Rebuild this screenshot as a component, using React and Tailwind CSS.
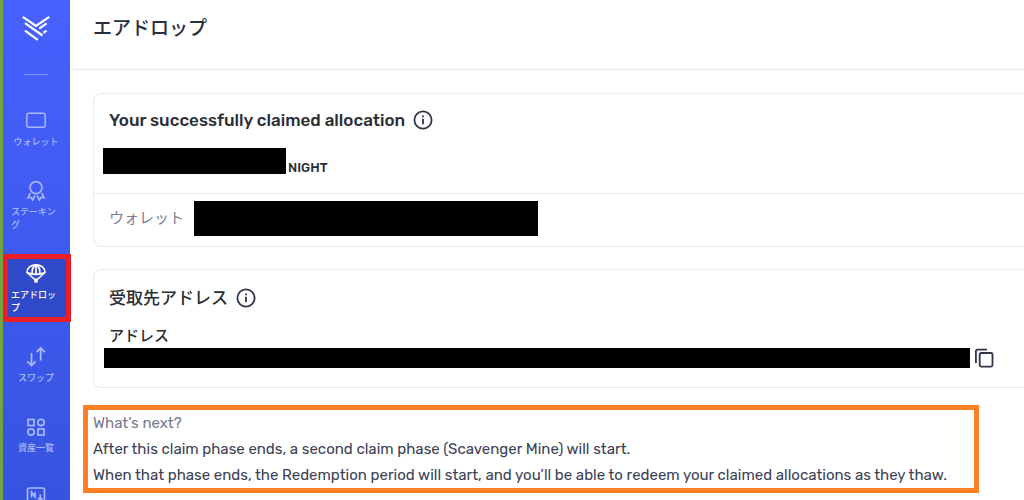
import clsx from "clsx";

const Logo = () => (
  <svg className="h-7 w-7" viewBox="0 0 28 28" fill="none" stroke="#fff" strokeWidth="2.200">
    <path d="M.8 2.800L14 12 27.200 2.800" />
    <path d="M3 9.200l17.500 12.300" />
    <path d="M3 16.600l12.700 9.200" />
    <path d="M24.600 9.400L17.300 14.600" />
    <path d="M24.600 16.600l-3.200 2.300" />
  </svg>
);

const WalletIcon = () => (
  <svg className="h-5.5 w-5.5" viewBox="0 0 22 22" fill="none" stroke="currentColor" strokeWidth="1.5">
    <rect x="1.800" y="3.300" width="18.400" height="14" rx="2" />
  </svg>
);

const StakingIcon = () => (
  <svg className="h-5.5 w-5.5" viewBox="0 0 22 22" fill="none" stroke="currentColor" strokeWidth="1.600">
    <circle cx="11" cy="7.600" r="6" />
    <path d="M5.200 13.200L3 17.700l3-.4 1.700 2.700 2.300-4.300M16.800 13.200l2.200 4.500-3-.4-1.700 2.700-2.300-4.300" />
  </svg>
);

const AirdropIcon = () => (
  <svg className="h-5.5 w-5.5" viewBox="0 0 22 22" fill="none" stroke="currentColor" strokeWidth="1.700">
    <path d="M2 9.500C2 5 6 1.800 11 1.800S20 5 20 9.500c-2.500 1.200-5.500 1.800-9 1.800s-6.500-.6-9-1.800z" />
    <path d="M7 10.800C7 6.500 8.500 3 11 1.800c2.500 1.200 4 4.700 4 9M11 2v9" />
    <path d="M2.200 9.800l7.300 6.400h3l7.300-6.400" strokeWidth="1.500" />
    <rect x="9.300" y="15.800" width="3.400" height="3.800" fill="currentColor" stroke="none" />
  </svg>
);

const SwapIcon = () => (
  <svg className="h-5.5 w-5.5" viewBox="0 0 22 22" fill="none" stroke="currentColor" strokeWidth="1.800">
    <path d="M6.500 7v12.500M2.300 15.300l4.200 4.200 4.200-4.200M15.700 14.500V2M11.500 6.200L15.700 2l4.200 4.200" />
  </svg>
);

const AssetsIcon = () => (
  <svg className="h-5.5 w-5.5" viewBox="0 0 22 22" fill="none" stroke="currentColor" strokeWidth="1.700">
    <rect x="3" y="3.500" width="6" height="6" />
    <circle cx="16" cy="6.500" r="3.200" />
    <circle cx="6" cy="16" r="3.200" />
    <rect x="13" y="13" width="6" height="6" />
  </svg>
);

const NftIcon = () => (
  <svg className="h-5.5 w-5.5" viewBox="0 0 22 22" fill="none" stroke="currentColor" strokeWidth="1.600">
    <rect x="2.500" y="2" width="17" height="17.500" rx="2" />
    <path d="M6.500 11.500V6l3.500 5V6M15.300 8.500v5.500M13 12l2.300 2.300 2.300-2.300M7 16h3" />
  </svg>
);

const InfoIcon = () => (
  <svg className="h-5 w-5" viewBox="0 0 20 20" fill="none" stroke="#2f3448" strokeWidth="1.800">
    <circle cx="10" cy="10" r="8.600" />
    <path d="M10 8.700v5.600M10 5.400v1.800" />
  </svg>
);

const CopyIcon = () => (
  <svg className="h-5 w-5" viewBox="0 0 20 20" fill="none" stroke="#2f3448" strokeWidth="1.800">
    <rect x="5.700" y="5" width="12.800" height="13.600" rx="1.500" />
    <path d="M1.900 15V3.200c0-1 .6-1.600 1.600-1.600H13" />
  </svg>
);

const menu = [
  { label: "ウォレット", icon: <WalletIcon /> },
  { label: "ステーキング", icon: <StakingIcon /> },
  { label: "エアドロップ", icon: <AirdropIcon />, active: true },
  { label: "スワップ", icon: <SwapIcon /> },
  { label: "資産一覧", icon: <AssetsIcon /> },
  { icon: <NftIcon /> },
];

function Sidebar() {
  return (
    <aside className="flex w-[70px] shrink-0 flex-col items-center border-l-3 border-[#71a440] bg-linear-to-b from-[#4760ff] to-[#3654e0] pr-px">
      <a href="#" aria-label="Home" className="mt-3.5">
        <Logo />
      </a>
      <hr className="mt-8 w-6 border-[#8497ff]" />
      <nav className="mt-6.5 flex w-full flex-col gap-[15px]">
        {menu.map(({ label, icon, active }, key) => (
          <a
            key={key}
            href="#"
            className={clsx(
              "relative flex flex-col items-center gap-1 pt-[9px] pb-[7px]",
              active ? "bg-[#3049c9] text-white" : "text-[#a9b7ff]"
            )}
          >
            {icon}
            {label && (
              <span className="max-w-[50px] text-[9px] leading-[13px] font-medium break-all">{label}</span>
            )}
            {active && <span className="absolute inset-y-0 left-0 -right-0.5 border-5 border-[#ee1c25]" />}
          </a>
        ))}
      </nav>
    </aside>
  );
}

function InfoButton() {
  return (
    <button type="button" aria-label="Info">
      <InfoIcon />
    </button>
  );
}

export default function App() {
  return (
    <div className="flex h-screen overflow-hidden bg-white font-[Rubik,Roboto,'Noto_Sans_CJK_JP',sans-serif] text-[#2b2d35]">
      <Sidebar />
      <main className="min-w-0 flex-1">
        <header className="flex h-[70px] items-center border-b border-[#e8eaf2] px-[23px] pb-2.5">
          <h1 className="text-[19px] font-medium text-[#2a2f40]">エアドロップ</h1>
        </header>

        <div className="pt-[23px] pl-[23px]">
          <section className="rounded-l-lg border border-r-0 border-[#e9ebf2]">
            <div className="flex items-center gap-2 px-[15px] pt-3.5">
              <h2 className="text-[17px] leading-6 font-medium">Your successfully claimed allocation</h2>
              <InfoButton />
            </div>
            <div className="mt-4 flex items-end gap-0.5 pb-[19px] pl-[9px]">
              <div className="h-[26px] w-[183px] bg-black" />
              <span className="text-[13px] leading-[13px] font-medium">NIGHT</span>
            </div>
            <div className="flex items-center gap-2.5 border-t border-[#e9ebf2] pt-[7px] pr-4 pb-2.5 pl-[15px]">
              <span className="text-[15px] text-[#7a8194]">ウォレット</span>
              <div className="h-[35px] w-[344px] bg-black" />
            </div>
          </section>

          <section className="mt-[22px] rounded-l-lg border border-r-0 border-[#e9ebf2] pb-[19px]">
            <div className="flex items-center gap-2 px-[15px] pt-4">
              <h2 className="text-[17px] leading-6 font-medium">受取先アドレス</h2>
              <InfoButton />
            </div>
            <h3 className="mt-3.5 pl-[15px] text-[15px] leading-6 font-medium">アドレス</h3>
            <div className="flex items-center gap-1 pr-[30px] pl-2.5">
              <div className="h-5 flex-1 bg-black" />
              <button type="button" aria-label="Copy address">
                <CopyIcon />
              </button>
            </div>
          </section>

          <section className="mt-[17px] mr-[45px] -ml-2.5 border-5 border-[#ff7f27] px-[5px] text-[15px] leading-[26px] text-[#3c4155]">
            <h4 className="text-[#747b8c]">What’s next?</h4>
            <p>After this claim phase ends, a second claim phase (Scavenger Mine) will start.</p>
            <p>When that phase ends, the Redemption period will start, and you'll be able to redeem your claimed allocations as they thaw.</p>
          </section>
        </div>
      </main>
    </div>
  );
}
